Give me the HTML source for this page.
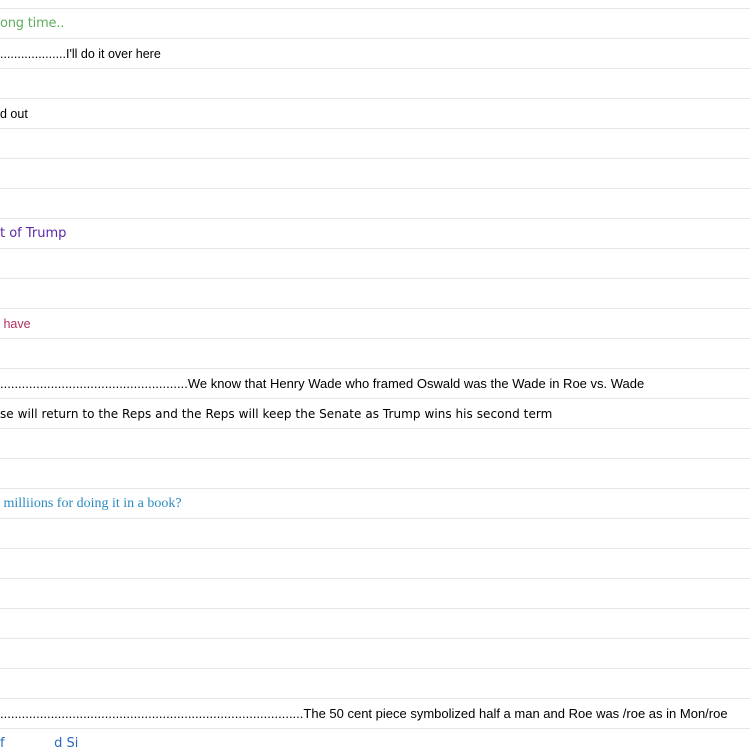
<!DOCTYPE html>
<html><head><style>
body{margin:0;width:750px;height:739px;overflow:hidden;background:#fff;position:relative}
.l{position:absolute;left:0;width:750px;height:1px;background:#e6e6e6}
.t{position:absolute;left:0;white-space:nowrap;line-height:16px;font-size:13px}
</style></head><body>
<div class="l" style="top:8px"></div><div class="l" style="top:38px"></div><div class="l" style="top:68px"></div><div class="l" style="top:98px"></div><div class="l" style="top:128px"></div><div class="l" style="top:158px"></div><div class="l" style="top:188px"></div><div class="l" style="top:218px"></div><div class="l" style="top:248px"></div><div class="l" style="top:278px"></div><div class="l" style="top:308px"></div><div class="l" style="top:338px"></div><div class="l" style="top:368px"></div><div class="l" style="top:398px"></div><div class="l" style="top:428px"></div><div class="l" style="top:458px"></div><div class="l" style="top:488px"></div><div class="l" style="top:518px"></div><div class="l" style="top:548px"></div><div class="l" style="top:578px"></div><div class="l" style="top:608px"></div><div class="l" style="top:638px"></div><div class="l" style="top:668px"></div><div class="l" style="top:698px"></div><div class="l" style="top:728px"></div>
<div class="t" style="top:16px;color:#5fae5f;font-family:'DejaVu Sans',sans-serif;font-size:13px;letter-spacing:-0.2px">ong time..</div>
<div class="t" style="top:46px;font-family:'Liberation Sans',sans-serif;font-size:12.5px">...................I'll do it over here</div>
<div class="t" style="top:106px;font-family:'Liberation Sans',sans-serif;font-size:12.5px">d out</div>
<div class="t" style="top:226px;color:#5a2aa8;font-family:'DejaVu Sans',sans-serif;font-size:13px">t of Trump</div>
<div class="t" style="top:316px;color:#b03060;font-family:'Liberation Sans',sans-serif;font-size:12.5px">&nbsp;have</div>
<div class="t" style="top:376px;font-family:'Liberation Sans',sans-serif;font-size:13px">....................................................We know that Henry Wade who framed Oswald was the Wade in Roe vs. Wade</div>
<div class="t" style="top:406px;font-family:'DejaVu Sans',sans-serif;font-size:12px;letter-spacing:0.05px">se will return to the Reps and the Reps will keep the Senate as Trump wins his second term</div>
<div class="t" style="top:496px;color:#2a8ac0;font-family:'Liberation Serif',serif;font-size:14px">&nbsp;milliions for doing it in a book?</div>
<div class="t" style="top:706px;font-family:'Liberation Sans',sans-serif;font-size:13px">....................................................................................The 50 cent piece symbolized half a man and Roe was /roe as in Mon/roe</div>
<div class="t" style="top:736px;color:#2a6ac0;font-family:'DejaVu Sans',sans-serif;font-size:13px">f&nbsp;&nbsp;&nbsp;&nbsp;&nbsp;&nbsp;&nbsp;&nbsp;&nbsp;&nbsp;&nbsp;&nbsp;d Si</div>
</body></html>
